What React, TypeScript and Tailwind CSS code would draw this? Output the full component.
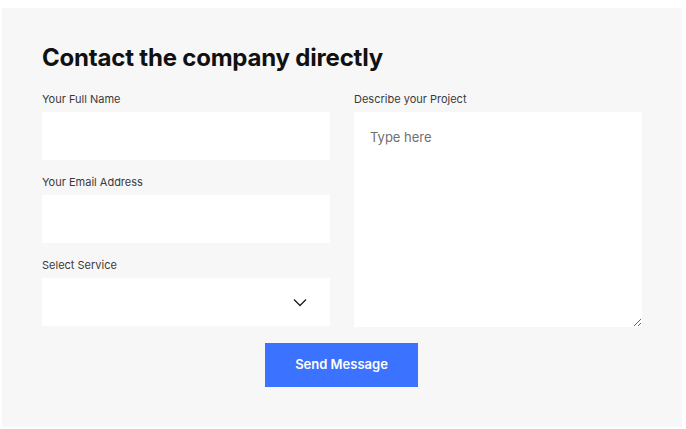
import React from "react";

export default function App() {
  return (
    <div className="w-[686px] h-[429px] bg-white pt-[8px] pl-[2px]" style={{ fontFamily: "Inter, 'Noto Sans', sans-serif" }}>
      <div className="w-[680px] h-[419px] bg-[#f7f7f7] px-[40px] pt-[38px]">
        <h1 className="text-[24px] leading-[24px] font-bold text-[#111] tracking-[-0.2px]">Contact the company directly</h1>
        <div className="mt-[21px] grid grid-cols-2 gap-x-[24px]">
          <div className="flex flex-col">
            <label className="text-[11px] leading-[16px] text-[#3a3a3a]">Your Full Name</label>
            <input className="mt-[5px] h-[48px] bg-white outline-none px-4 text-[13px]" />
            <label className="mt-[14px] text-[11px] leading-[16px] text-[#3a3a3a]">Your Email Address</label>
            <input className="mt-[5px] h-[48px] bg-white outline-none px-4 text-[13px]" />
            <label className="mt-[14px] text-[11px] leading-[16px] text-[#3a3a3a]">Select Service</label>
            <div className="relative mt-[5px] h-[48px] bg-white">
              <svg className="absolute right-[23px] top-[20px]" width="14" height="9" viewBox="0 0 14 9" fill="none">
                <path d="M1 1.5 L7 7.5 L13 1.5" stroke="#222" strokeWidth="1.4" />
              </svg>
            </div>
          </div>
          <div className="flex flex-col">
            <label className="text-[11px] leading-[16px] text-[#3a3a3a]">Describe your Project</label>
            <textarea
              placeholder="Type here"
              className="mt-[5px] h-[215px] bg-white outline-none px-4 pt-[16px] text-[13px] leading-[18px] text-[#333] placeholder:text-[#707070] resize"
            />
          </div>
        </div>
        <div className="flex justify-center mt-[16px] pr-[1px]">
          <button className="w-[153px] h-[44px] bg-[#3b72ff] text-white text-[13px] font-semibold">Send Message</button>
        </div>
      </div>
    </div>
  );
}
